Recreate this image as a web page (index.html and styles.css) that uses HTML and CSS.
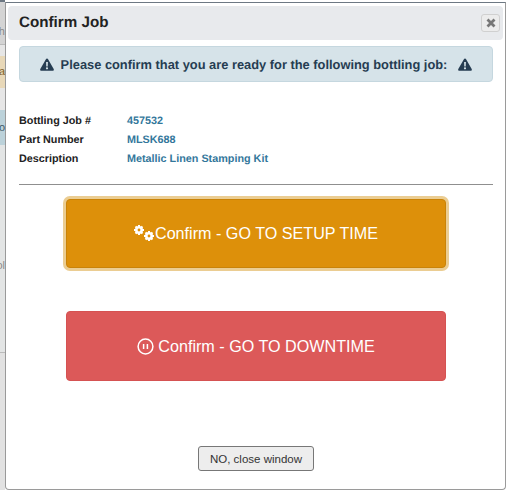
FILE: index.html
```html
<!DOCTYPE html>
<html lang="en">
  <head>
    <meta charset="UTF-8" />
    <meta name="viewport" content="width=device-width, initial-scale=1.0" />
    <title>Confirm Job</title>
    <link rel="stylesheet" href="styles.css">
  </head>
  <body>
    <div class="backdrop">
      <div class="strip strip-head">oh</div>
      <div class="strip strip-gap"></div>
      <div class="strip strip-tan">a</div>
      <div class="strip strip-gap2"></div>
      <div class="strip strip-blue">o</div>
      <div class="strip strip-rest">ol</div>
      <div class="strip strip-foot"></div>
    </div>
    <div class="dialog">
      <div class="titlebar">
        <h1>Confirm Job</h1>
        <button class="close" aria-label="Close">
          <svg width="10" height="10" viewBox="0 0 10 10">
            <path d="M1.5 1.5l7 7M8.5 1.5l-7 7" stroke="#777" stroke-width="2.8" />
          </svg>
        </button>
      </div>
      <div class="content">
        <div class="alert">
          <svg class="warn" width="14" height="13" viewBox="0 0 14 13">
            <path fill-rule="evenodd" d="M7 .5c.5 0 .9.3 1.1.7l5.6 9.9c.4.8-.1 1.6-1 1.6H1.3c-.9 0-1.4-.8-1-1.6L5.900 1.2C6.100.8 6.500.5 7 .5zM6.100 4l.2 4.400h1.400L7.900 4zM7 9.200a1.100 1.100 0 1 0 0 2.200 1.100 1.100 0 0 0 0-2.200z" />
          </svg>
          <span class="alert-text">Please confirm that you are ready for the following bottling job:</span>
          <svg class="warn" width="14" height="13" viewBox="0 0 14 13">
            <path fill-rule="evenodd" d="M7 .5c.5 0 .9.3 1.1.7l5.6 9.9c.4.8-.1 1.6-1 1.6H1.3c-.9 0-1.4-.8-1-1.6L5.900 1.2C6.100.8 6.500.5 7 .5zM6.100 4l.2 4.400h1.400L7.900 4zM7 9.200a1.100 1.100 0 1 0 0 2.200 1.100 1.100 0 0 0 0-2.200z" />
          </svg>
        </div>
        <dl class="details">
          <dt>Bottling Job #</dt>
          <dd>457532</dd>
          <dt>Part Number</dt>
          <dd>MLSK688</dd>
          <dt>Description</dt>
          <dd>Metallic Linen Stamping Kit</dd>
        </dl>
        <hr />
        <button class="action setup">
          <svg class="cogs" width="21" height="17" viewBox="0 0 21 17">
            <g fill="none" stroke="#fff">
              <circle cx="5" cy="5" r="2.700" stroke-width="2.600" />
              <path d="M5 0v2.500M5 7.500V10M0 5h2.500M7.500 5H10M1.500 1.500l1.800 1.800M6.700 6.700l1.800 1.800M1.500 8.500l1.800-1.800M6.700 3.300l1.800-1.800" stroke-width="2" />
              <circle cx="15" cy="11" r="2.700" stroke-width="2.600" />
              <path d="M15 6v2.500M15 13.500V16M10 11h2.500M17.500 11H20M11.500 7.500l1.800 1.800M16.700 12.700l1.800 1.800M11.500 14.500l1.800-1.800M16.700 9.300l1.800-1.800" stroke-width="2" />
            </g>
          </svg>
          <span>Confirm - GO TO SETUP TIME</span>
        </button>
        <button class="action downtime">
          <svg class="pause" width="17" height="17" viewBox="0 0 17 17">
            <circle cx="8.500" cy="8.500" r="7.400" fill="none" stroke="#fff" stroke-width="1.500" />
            <path d="M6.600 6v5M10.400 6v5" stroke="#fff" stroke-width="1.500" />
          </svg>
          <span>Confirm - GO TO DOWNTIME</span>
        </button>
        <button class="dismiss">NO, close window</button>
      </div>
    </div>
  </body>
</html>
```

FILE: styles.css
```css
* {
  box-sizing: border-box;
}
html,
body {
  height: 100%;
}
body {
  display: flex;
  margin: 0;
  overflow: hidden;
  font-family: "Liberation Sans", Arial, sans-serif;
  text-rendering: geometricPrecision;
  background: #fff;
  color: #222;
}
.backdrop {
  display: flex;
  flex-direction: column;
  flex: 0 0 5px;
  overflow: hidden;
  border-top: 2px solid #6d7883;
  font-size: 11px;
  color: #8a8a8a;
}
.strip {
  display: flex;
  justify-content: flex-end;
  align-items: center;
  white-space: nowrap;
}
.strip-head {
  height: 43px;
  padding-top: 17px;
  background: #d4d4d4;
  border-bottom: 1px solid #bbb;
}
.strip-gap,
.strip-gap2 {
  background: #e6e6e6;
}
.strip-gap {
  height: 11px;
}
.strip-gap2 {
  height: 22px;
}
.strip-tan {
  height: 32px;
  background: #e8d8b8;
  color: #80622c;
}
.strip-blue {
  height: 35px;
  background: #bcd2da;
  color: #3f5a66;
}
.strip-rest {
  height: 208px;
  padding-top: 34px;
  background: #e3e5e5;
  border-bottom: 1px solid #bbb;
}
.strip-foot {
  flex: 1;
  background: #e2e2e2;
}
.dialog {
  display: flex;
  flex-direction: column;
  flex: 0 0 501px;
  height: 488px;
  margin-top: 2px;
  padding: 3px 2px;
  background: #fff;
  border: 1px solid #9a9a9a;
  border-top-color: #6d7883;
  border-radius: 0 0 4px 4px;
}
.titlebar {
  display: flex;
  justify-content: space-between;
  align-items: center;
  flex: 0 0 34px;
  padding: 0 3px 0 11px;
  background: #e8eaed;
  border-radius: 4px;
}
h1 {
  margin: 0 0 1px;
  font-size: 15.2px;
  font-weight: bold;
  color: #222;
}
.close {
  display: flex;
  justify-content: center;
  align-items: center;
  width: 19px;
  height: 18px;
  padding: 0;
  background: #ececec;
  border: 1px solid #d0d0d0;
  border-radius: 3px;
}
.content {
  display: flex;
  flex-direction: column;
  flex: 1;
  padding: 6px 10px 0 11px;
}
.alert {
  display: flex;
  justify-content: center;
  align-items: center;
  gap: 7px;
  height: 36px;
  background: #d6e3e9;
  border: 1px solid #c5d7df;
  border-radius: 4px;
  font-size: 12.85px;
  font-weight: bold;
  color: #263d52;
}
.alert-text {
  margin-right: 4px;
}
.warn {
  fill: #263d52;
}
.details {
  display: grid;
  grid-template-columns: 108px 1fr;
  grid-auto-rows: 19px;
  align-items: center;
  margin: 29px 0 0;
  font-size: 10.8px;
  font-weight: bold;
}
.details dt {
  color: #222;
}
.details dd {
  margin: 0;
  color: #33779b;
}
hr {
  width: 100%;
  height: 1px;
  margin: 16px 0 0;
  border: none;
  background: #8f8f8f;
}
.action {
  display: flex;
  justify-content: center;
  align-items: center;
  align-self: center;
  width: 380px;
  border-radius: 4px;
  font-family: inherit;
  font-size: 16.15px;
  color: #fff;
}
.setup {
  height: 69px;
  margin-top: 14px;
  padding: 0;
  background: #dd900a;
  border: 1px solid #c98308;
  box-shadow: 0 0 0 3px #ebcd92;
}
.downtime {
  gap: 4px;
  height: 70px;
  margin-top: 43px;
  padding: 1px 0 0;
  background: #dc5959;
  border: 1px solid #d55252;
}
.dismiss {
  align-self: center;
  width: 116px;
  height: 25px;
  margin-top: 65px;
  padding: 0;
  background: #ededed;
  border: 1px solid #777;
  border-radius: 3px;
  font-family: inherit;
  font-size: 11.5px;
  color: #333;
}
```
